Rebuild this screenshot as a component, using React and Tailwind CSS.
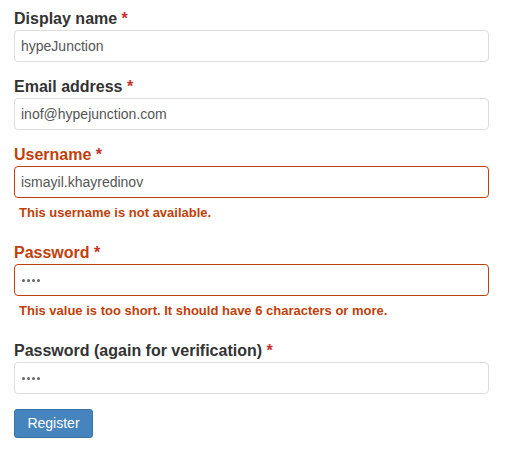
export default function App() {
  const fields = [
    { label: 'Display name', value: 'hypeJunction' },
    { label: 'Email address', value: 'inof@hypejunction.com' },
    { label: 'Username', value: 'ismayil.khayredinov', error: 'This username is not available.' },
    { label: 'Password', value: '••••', password: true, error: 'This value is too short. It should have 6 characters or more.' },
    { label: 'Password (again for verification)', value: '••••', password: true },
  ];

  return (
    <div className="min-h-screen bg-white px-[14px] pt-[9px] font-['Liberation_Sans',Arial,sans-serif]">
      <form className="w-[475px]" onSubmit={(e) => e.preventDefault()}>
        {fields.map((f) => (
          <div key={f.label} className="mb-[15px]">
            <label
              className={`block text-[16px] font-bold leading-[20px] mb-[1px] ${
                f.error ? 'text-[#c13f0a]' : 'text-[#333]'
              }`}
            >
              {f.label} <span className="text-[#c9302c]">*</span>
            </label>
            <div
              className={`h-[32px] rounded-[4px] border px-[6px] flex items-center text-[14px] text-[#555] ${
                f.error ? 'border-[#c13f0a]' : 'border-[#ddd]'
              }`}
            >
              {f.password ? (
                <span className="flex gap-[2px] pl-[1px]" aria-label={f.value}>
                  {[0, 1, 2, 3].map((i) => (
                    <span key={i} className="block h-[3px] w-[3px] rounded-full bg-[#666]" />
                  ))}
                </span>
              ) : (
                f.value
              )}
            </div>
            {f.error && (
              <div className="pl-[5px] pt-[7px] pb-[7px] text-[13px] font-bold leading-[16px] text-[#c13f0a]">
                {f.error}
              </div>
            )}
          </div>
        ))}
        <button
          type="submit"
          className="h-[29px] w-[79px] rounded-[3px] border border-[#3a72a6] bg-[#4684bd] text-[14px] text-white"
        >
          Register
        </button>
      </form>
    </div>
  );
}
